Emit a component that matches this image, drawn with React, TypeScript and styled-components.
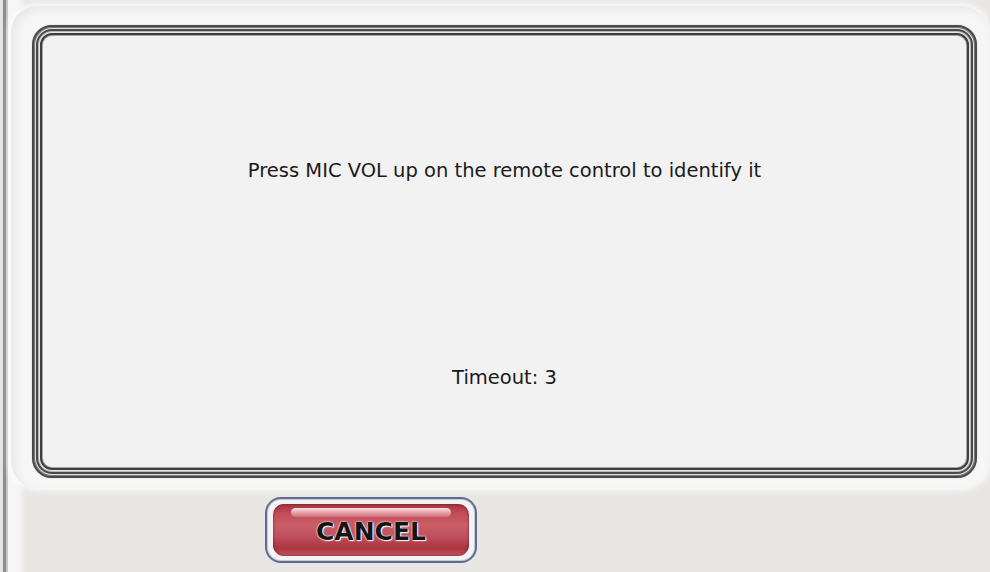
import styled, { createGlobalStyle } from 'styled-components'

const GlobalStyle = createGlobalStyle`
    html, body {
        margin: 0;
        padding: 0;
        background: #e8e6e4;
    }
`

const Screen = styled.div`
    width: 990px;
    height: 572px;
    overflow: hidden;
    display: flex;
    flex-direction: column;
    font-family: "DejaVu Sans", "Liberation Sans", sans-serif;
    background: linear-gradient(to right, #e4e4e4 0 3px, #8c8c8c 3px 6px, #c8c8c8 6px 8px, #f6f6f6 8px 18px, #e9e7e4 26px);
`

const TopPanel = styled.div`
    margin: 6px 2px 0 11px;
    height: 482px;
    box-sizing: border-box;
    border-radius: 26px;
    background: #f6f6f6;
    box-shadow: 0 0 6px 2px rgba(255, 255, 255, 0.9), inset 4px 4px 8px rgba(0, 0, 0, 0.06);
    padding: 19px 10px 0 21px;
`

const Frame = styled.div`
    width: 945px;
    height: 453px;
    box-sizing: border-box;
    border-radius: 20px;
    border: 2px solid #4a4a4a;
    background: #f3f2f3;
    box-shadow:
        0 0 1px 0 rgba(0, 0, 0, 0.4),
        inset 0 0 0 1px #7a7a7a,
        inset 0 0 0 2px #e0e0e0,
        inset 0 0 0 4px #4a4a4a,
        inset 0 0 0 5px #b8b8b8,
        inset 0 0 0 6px #e8e8e8,
        inset 0 0 0 8px #3e3e3e,
        inset 0 0 0 9px #a8a8a8;
    display: flex;
    flex-direction: column;
    align-items: center;
    padding-top: 133px;
`

const Message = styled.p`
    margin: 0;
    font-size: 19.5px;
    color: #1a1a1a;
    line-height: 22px;
`

const Timeout = styled(Message)`
    margin-top: 185px;
`

const ButtonRow = styled.div`
    display: flex;
    padding: 9px 0 0 265px;
`

const ButtonRing = styled.div`
    width: 212px;
    height: 66px;
    box-sizing: border-box;
    border-radius: 16px;
    border: 2px solid #5f6b90;
    background: #f4f4f6;
    padding: 5px 6px;
    box-shadow: inset 0 0 0 1px #c8cbd8;
`

const CancelButton = styled.button`
    width: 100%;
    height: 100%;
    border: none;
    border-radius: 11px;
    padding: 2px 0 0;
    cursor: pointer;
    position: relative;
    background: linear-gradient(to bottom, #a7343e 0%, #c24c57 18%, #ca5e68 40%, #c05060 62%, #ab343f 85%, #c25862 100%);
    box-shadow: inset 0 0 3px rgba(60, 0, 0, 0.6);
    font-family: "DejaVu Sans", "Liberation Sans", sans-serif;
    font-weight: bold;
    font-size: 25px;
    color: #141414;
    text-shadow: 0 0 2px #fff, 0 0 1px #fff, 1px 1px 1px #fff;

    &::before {
        content: '';
        position: absolute;
        left: 18px;
        right: 18px;
        top: 4px;
        height: 9px;
        border-radius: 6px;
        background: linear-gradient(to bottom, rgba(255, 235, 238, 0.95), rgba(240, 170, 178, 0.3));
    }

    span {
        position: relative;
    }
`

const App = () => {
    return (
        <Screen>
            <GlobalStyle />
            <TopPanel>
                <Frame>
                    <Message>Press MIC VOL up on the remote control to identify it</Message>
                    <Timeout>Timeout: 3</Timeout>
                </Frame>
            </TopPanel>
            <ButtonRow>
                <ButtonRing>
                    <CancelButton>
                        <span>CANCEL</span>
                    </CancelButton>
                </ButtonRing>
            </ButtonRow>
        </Screen>
    )
}

export default App
